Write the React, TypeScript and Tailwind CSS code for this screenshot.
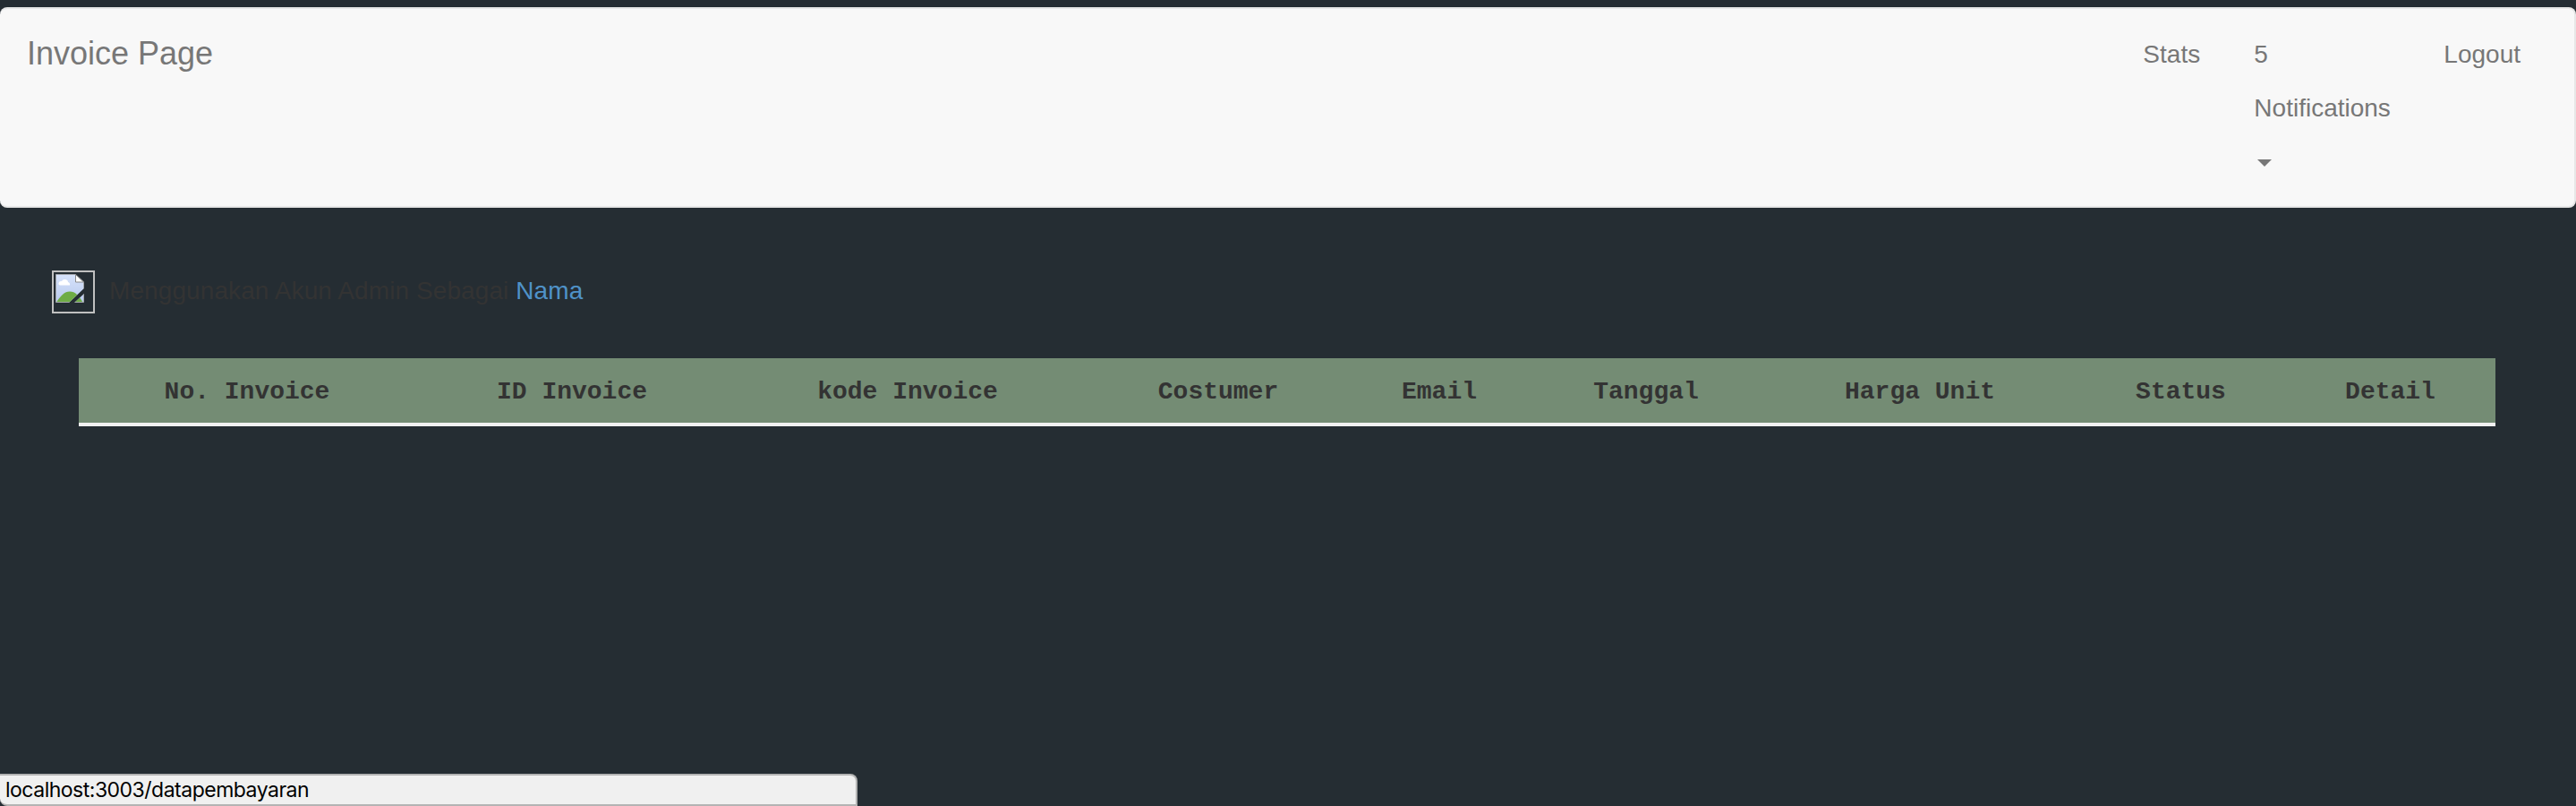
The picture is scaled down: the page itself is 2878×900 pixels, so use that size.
const columns = [
  { label: 'No. Invoice', width: 'w-[376px]' },
  { label: 'ID Invoice', width: 'w-[350px]' },
  { label: 'kode Invoice', width: 'w-[400px]' },
  { label: 'Costumer', width: 'w-[294px]' },
  { label: 'Email', width: 'w-[200px]' },
  { label: 'Tanggal', width: 'w-[262px]' },
  { label: 'Harga Unit', width: 'w-[350px]' },
  { label: 'Status', width: 'w-[233px]' },
  { label: 'Detail', width: 'w-[235px]' },
];

function Navbar() {
  return (
    <nav className="flex h-56 justify-between rounded-lg border-y-2 border-r-2 border-[#e7e7e7] bg-[#f8f8f8] pr-[30px] text-[#777]">
      <a className="pt-[30px] pl-[30px] text-[36px] leading-[40px]">Invoice Page</a>
      <ul className="flex text-[28px] leading-[60px]">
        <li className="w-[124px] px-[30px] pt-[21px]">Stats</li>
        <li className="w-[212px] px-[30px] pt-[21px]">
          5<br />
          Notifications
          <br />
          <svg className="mt-[27px] ml-1 block" width="16" height="8" viewBox="0 0 16 8">
            <path d="M0 0H16L8 8Z" fill="#777" />
          </svg>
        </li>
        <li className="px-[30px] pt-[21px]">Logout</li>
      </ul>
    </nav>
  );
}

function BrokenImage() {
  return (
    <span className="flex h-12 w-12 border-2 border-[#c0c0c0]">
      <svg width="44" height="44" viewBox="0 0 44 44">
        <defs>
          <linearGradient id="sky" x1="0" y1="0" x2="0" y2="1">
            <stop offset="0" stopColor="#d6e2fa" />
            <stop offset="1" stopColor="#b9caee" />
          </linearGradient>
          <clipPath id="torn">
            <path d="M0 0H36V16L16 35H0ZM22 35L36 22V35Z" />
          </clipPath>
        </defs>
        <g clipPath="url(#torn)">
          <path d="M2.5 2.5H24.5L33.5 11V33.5H2.5Z" fill="url(#sky)" />
          <path d="M3 33.5C8 26 12 21.5 18 21.5S28 26 32.500 33.500Z" fill="#6fac46" />
          <path d="M2.5 2.5H24.5L33.5 11V33.5H2.5Z" fill="none" stroke="#a3a6ab" />
        </g>
        <path d="M7.500 14.500Q5 14.500 5.500 12T9 10Q10 7.500 13 8T16 11Q18.500 11.500 18 14.500Z" fill="#fff" />
        <path d="M24.5 2.5V11H33.500Z" fill="#fff" stroke="#8a8a8a" />
      </svg>
    </span>
  );
}

export default function App() {
  return (
    <div className="flex h-[900px] w-[2878px] flex-col overflow-hidden bg-[#252d33] pt-2 font-['Liberation_Sans',Arial,sans-serif]">
      <Navbar />
      <div className="mt-[70px] ml-[58px] flex h-12 text-[28px] leading-[40px] text-[#333]">
        <BrokenImage />
        <p className="ml-4 pt-[3px] tracking-[0.09px] whitespace-pre">
          Menggunakan Akun Admin Sebagai <a className="text-[#4f92c8]">Nama</a>
        </p>
      </div>
      <div className="mt-[50px] ml-[88px] w-[2700px] border-b-4 border-[#f1f1f1]">
        <table className="w-full table-fixed border-collapse font-['Liberation_Mono','Courier_New',monospace] text-[28px] leading-[40px] text-[#333]">
          <thead>
            <tr className="bg-[#748c74]">
              {columns.map((c) => (
                <th key={c.label} className={`${c.width} h-[72px] p-0 pt-1 text-center font-bold`}>
                  {c.label}
                </th>
              ))}
            </tr>
          </thead>
        </table>
      </div>
      <div className="mt-auto flex h-9 w-[958px] items-center rounded-tr-lg rounded-bl-lg border-y-2 border-r-2 border-[#b3b3b3] bg-[#f0f0f0] pl-1.5 font-['Inter',sans-serif] text-[23px] leading-none tracking-[-0.5px] text-black">
        localhost:3003/datapembayaran
      </div>
    </div>
  );
}
